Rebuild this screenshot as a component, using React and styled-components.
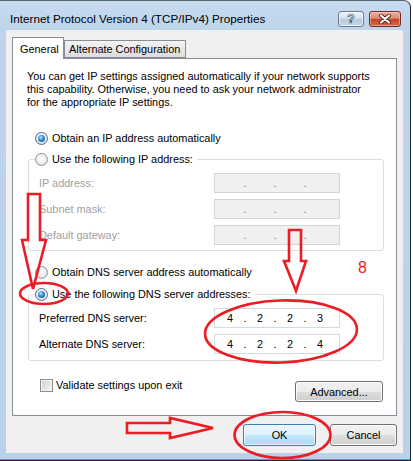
import React from "react";
import styled, { createGlobalStyle } from "styled-components";

const GlobalStyle = createGlobalStyle`
  html, body { margin: 0; padding: 0; background: #ffffff; }
  body { font-family: "Liberation Sans", Arial, sans-serif; font-size: 10.9px; color: #000; }
  *, *::before, *::after { box-sizing: border-box; }
`;

const Window = styled.div`
  position: relative;
  width: 411px;
  height: 461px;
  background: linear-gradient(180deg, #c7dbef 0%, #bdd4eb 30px, #b9d1ea 100%);
  border-top: 1px solid #5b6672;
  border-right: 1px solid #20252b;
  border-bottom: 1px solid #20252b;
  border-top-right-radius: 7px;
  box-shadow: inset 0 -1px 0 #45a3d6;
  display: flex;
  flex-direction: column;
`;

const TitleBar = styled.div`
  height: 29px;
  display: flex;
  align-items: center;
  padding: 6px 9px 0 10px;
`;

const Title = styled.div`
  flex: 1;
  font-size: 11.7px;
  color: #000;
  white-space: nowrap;
`;

const CaptionButtons = styled.div`
  display: flex;
  gap: 5px;
`;

const HelpButton = styled.div`
  width: 26px;
  height: 16px;
  border: 1px solid #6b7c90;
  border-radius: 3px;
  background: linear-gradient(180deg, #eef3f8 0%, #d6e1ec 45%, #b9cadc 52%, #c9d8e8 100%);
  box-shadow: inset 0 0 0 1px rgba(255, 255, 255, 0.55);
  display: flex;
  align-items: center;
  justify-content: center;
  font-weight: bold;
  font-size: 12px;
  color: #fff;
  -webkit-text-stroke: 0.7px #3c4a5c;
  line-height: 1;
`;

const CloseButton = styled.div`
  width: 32px;
  height: 16px;
  border: 1px solid #7a2a20;
  border-radius: 3px;
  background: linear-gradient(180deg, #eab0a3 0%, #dc8a76 45%, #c5432c 52%, #d2694e 100%);
  box-shadow: inset 0 0 0 1px rgba(255, 220, 210, 0.45);
  display: flex;
  align-items: center;
  justify-content: center;
`;

const Client = styled.div`
  flex: 1;
  margin: 0 7px 7px 6px;
  background: #f0f0f0;
  padding: 7px 6px 0 6px;
  display: flex;
  flex-direction: column;
`;

const TabStrip = styled.div`
  display: flex;
  align-items: flex-end;
  height: 21px;
`;

const Tab = styled.div`
  position: relative;
  z-index: ${(p) => (p.$active ? 2 : 1)};
  display: flex;
  align-items: center;
  white-space: nowrap;
  border: 1px solid #898c95;
  border-bottom: ${(p) => (p.$active ? "none" : "1px solid #898c95")};
  height: ${(p) => (p.$active ? "22px" : "18px")};
  margin-bottom: ${(p) => (p.$active ? "-1px" : "0")};
  width: ${(p) => p.$w}px;
  padding-left: ${(p) => p.$pl}px;
  background: ${(p) =>
    p.$active ? "#ffffff" : "linear-gradient(180deg, #f3f3f3 0%, #e9e9e9 50%, #dcdcdc 100%)"};
`;

const Panel = styled.div`
  position: relative;
  z-index: 1;
  background: #ffffff;
  border: 1px solid #898c95;
  height: 358px;
  display: flex;
  flex-direction: column;
`;

const Intro = styled.p`
  margin: 11px 0 0 14px;
  line-height: 13px;
  white-space: nowrap;
`;

const RadioRow = styled.label`
  display: flex;
  align-items: center;
  gap: 4px;
  height: 15px;
  line-height: 15px;
  white-space: nowrap;
  margin: ${(p) => p.$mt || 0}px 0 0 ${(p) => (p.$ml === undefined ? 22 : p.$ml)}px;
`;

const RadioGlyph = styled.span`
  width: 13px;
  height: 13px;
  flex: none;
  border-radius: 50%;
  border: 1px solid ${(p) => (p.$checked ? "#4e6b8a" : "#8d9096")};
  background: radial-gradient(circle at 50% 40%, #ffffff 0%, #ececec 55%, #cfd1d4 100%);
  display: flex;
  align-items: center;
  justify-content: center;
  &::after {
    content: "";
    display: ${(p) => (p.$checked ? "block" : "none")};
    width: 7px;
    height: 7px;
    border-radius: 50%;
    background: radial-gradient(circle at 40% 35%, #c2e8ff 0%, #3a94da 40%, #0b3f78 100%);
  }
`;

const Group = styled.fieldset`
  margin: ${(p) => p.$mt}px 12px 0 15px;
  padding: 0;
  border: 1px solid #d5dfe5;
  border-radius: 3px;
  min-width: 0;
`;

const GroupLegend = styled.legend`
  margin-left: 6px;
  padding: 0 4px 0 0;
  background: #fff;
`;

const FieldGrid = styled.div`
  display: grid;
  grid-template-columns: 1fr 126px;
  row-gap: 6px;
  align-items: center;
  padding: ${(p) => p.$pt}px 43px ${(p) => p.$pb}px 10px;
`;

const FieldLabel = styled.span`
  white-space: nowrap;
  color: ${(p) => (p.$disabled ? "#a0a0a0" : "#000")};
`;

const IpBox = styled.div`
  height: 20px;
  display: grid;
  grid-template-columns: 26px 4px 26px 4px 26px 4px 26px;
  align-items: center;
  padding-left: 2px;
  border: 1px solid ${(p) => (p.$disabled ? "#d5d5d5" : "#d6d9dd")};
  background: ${(p) => (p.$disabled ? "#f0f0f0" : "#ffffff")};
`;

const Octet = styled.span`
  text-align: center;
`;

const Dot = styled.span`
  text-align: center;
  color: ${(p) => (p.$disabled ? "#6d6d6d" : "#000")};
`;

const BottomRow = styled.div`
  display: flex;
  justify-content: space-between;
  align-items: flex-start;
  margin: 20px 13px 0 27px;
`;

const CheckLabel = styled.label`
  display: flex;
  align-items: center;
  gap: 3px;
  line-height: 13px;
  margin-top: -2px;
  white-space: nowrap;
`;

const CheckGlyph = styled.span`
  width: 13px;
  height: 13px;
  flex: none;
  border: 1px solid #8e8f8f;
  background: linear-gradient(135deg, #cdd1d6 0%, #e6e7e8 60%, #f7f7f7 100%);
  box-shadow: inset 0 0 0 1px #f4f4f4;
`;

const Button = styled.div`
  width: ${(p) => p.$w}px;
  height: ${(p) => p.$h || 22}px;
  display: flex;
  align-items: center;
  justify-content: center;
  border-radius: 3px;
  border: 1px solid ${(p) => (p.$default ? "#3c7fb1" : "#707070")};
  background: ${(p) =>
    p.$default
      ? "linear-gradient(180deg, #ecf7fd 0%, #dcf1fc 50%, #c2e7fc 51%, #a9daf5 100%)"
      : "linear-gradient(180deg, #f2f2f2 0%, #ebebeb 50%, #dddddd 51%, #cfcfcf 100%)"};
  box-shadow: inset 0 0 0 1px ${(p) => (p.$default ? "rgba(255,255,255,0.7)" : "#fbfbfb")};
  white-space: nowrap;
`;

const ButtonRow = styled.div`
  display: flex;
  justify-content: flex-end;
  gap: 14px;
  margin-top: 8px;
`;

const Overlay = styled.svg`
  position: absolute;
  z-index: 10;
  left: 0;
  top: -1px;
  width: 411px;
  height: 461px;
  pointer-events: none;
  overflow: visible;
`;

function IpField({ values, disabled }) {
  const v = values || ["", "", "", ""];
  return (
    <IpBox $disabled={disabled}>
      <Octet>{v[0]}</Octet>
      <Dot $disabled={disabled}>.</Dot>
      <Octet>{v[1]}</Octet>
      <Dot $disabled={disabled}>.</Dot>
      <Octet>{v[2]}</Octet>
      <Dot $disabled={disabled}>.</Dot>
      <Octet>{v[3]}</Octet>
    </IpBox>
  );
}

export default function App() {
  const red = "#ed1c24";
  return (
    <>
      <GlobalStyle />
      <Window>
        <TitleBar>
          <Title>Internet Protocol Version 4 (TCP/IPv4) Properties</Title>
          <CaptionButtons>
            <HelpButton>?</HelpButton>
            <CloseButton>
              <svg width="14" height="10" viewBox="0 0 14 10">
                <path d="M3 1.5 L11 8.5 M11 1.5 L3 8.5" stroke="#5c1d14" strokeWidth="4" strokeLinecap="round" />
                <path d="M3 1.5 L11 8.5 M11 1.5 L3 8.5" stroke="#ffffff" strokeWidth="2.2" strokeLinecap="round" />
              </svg>
            </CloseButton>
          </CaptionButtons>
        </TitleBar>
        <Client>
          <TabStrip>
            <Tab $active $w={52} $pl={7}>General</Tab>
            <Tab $w={122} $pl={4}>Alternate Configuration</Tab>
          </TabStrip>
          <Panel>
            <Intro>
              You can get IP settings assigned automatically if your network supports
              <br />
              this capability. Otherwise, you need to ask your network administrator
              <br />
              for the appropriate IP settings.
            </Intro>
            <RadioRow $mt={22}>
              <RadioGlyph $checked />
              Obtain an IP address automatically
            </RadioRow>
            <Group $mt={6}>
              <GroupLegend>
                <RadioRow $ml={0}>
                  <RadioGlyph />
                  Use the following IP address:
                </RadioRow>
              </GroupLegend>
              <FieldGrid $pt={6} $pb={5}>
                <FieldLabel $disabled>IP address:</FieldLabel>
                <IpField disabled />
                <FieldLabel $disabled>Subnet mask:</FieldLabel>
                <IpField disabled />
                <FieldLabel $disabled>Default gateway:</FieldLabel>
                <IpField disabled />
              </FieldGrid>
            </Group>
            <RadioRow $mt={14}>
              <RadioGlyph />
              Obtain DNS server address automatically
            </RadioRow>
            <Group $mt={7}>
              <GroupLegend>
                <RadioRow $ml={0}>
                  <RadioGlyph $checked />
                  Use the following DNS server addresses:
                </RadioRow>
              </GroupLegend>
              <FieldGrid $pt={6} $pb={6}>
                <FieldLabel>Preferred DNS server:</FieldLabel>
                <IpField values={["4", "2", "2", "3"]} />
                <FieldLabel>Alternate DNS server:</FieldLabel>
                <IpField values={["4", "2", "2", "4"]} />
              </FieldGrid>
            </Group>
            <BottomRow>
              <CheckLabel>
                <CheckGlyph />
                Validate settings upon exit
              </CheckLabel>
              <Button $w={88} $h={21}>Advanced...</Button>
            </BottomRow>
          </Panel>
          <ButtonRow>
            <Button $default $w={73}>OK</Button>
            <Button $w={67}>Cancel</Button>
          </ButtonRow>
        </Client>
        <Overlay viewBox="0 0 411 461">
          <g fill="none" stroke={red} strokeWidth="2.6" strokeLinejoin="miter">
            <polygon points="28,194 40,194 40,240 46,240 33,289 22,240 28,240" />
            <ellipse cx="44" cy="293.5" rx="24" ry="10.5" />
            <polygon points="289,230 301,230 301,261 306,261 296,291 284,261 289,261" />
            <ellipse cx="281" cy="331.5" rx="76" ry="31" transform="rotate(-2 281 331.5)" />
            <polygon points="127,423 170,423 170,418 213,428 170,438 170,433 127,433" />
            <ellipse cx="282.5" cy="435" rx="48" ry="23" />
          </g>
          <text x="362.5" y="273" fontSize="16" fill={red} textAnchor="middle" fontFamily="Liberation Sans, Arial, sans-serif">8</text>
        </Overlay>
      </Window>
    </>
  );
}
